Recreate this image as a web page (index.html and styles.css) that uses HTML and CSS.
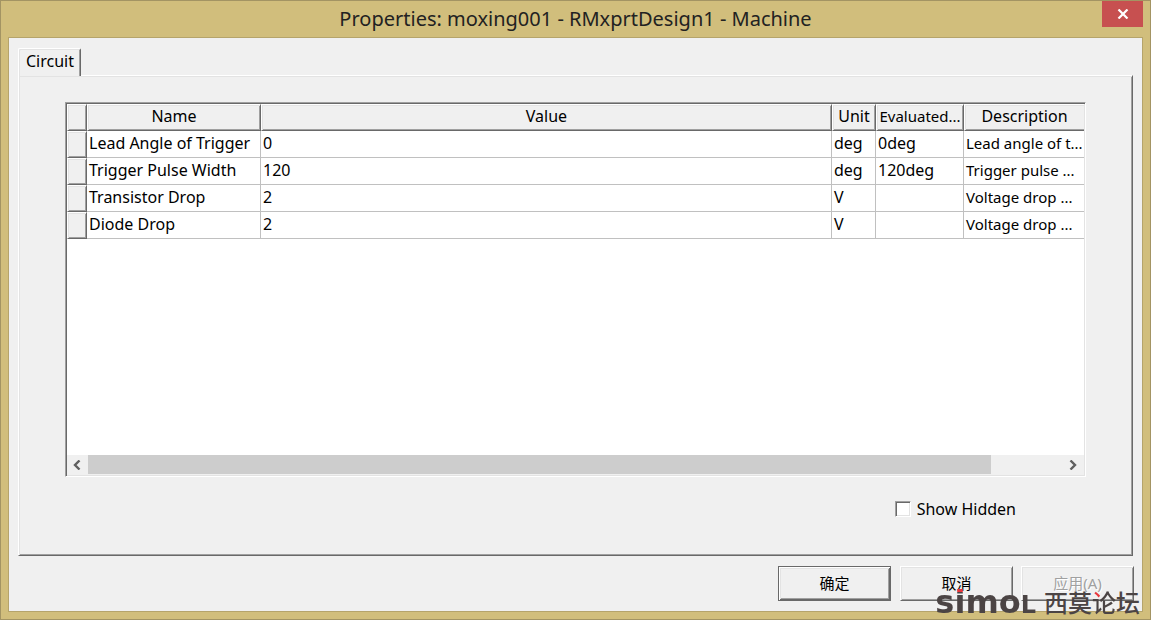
FILE: index.html
```html
<!DOCTYPE html>
<html lang="zh-CN">
<head>
<meta charset="utf-8">
<title>Properties: moxing001 - RMxprtDesign1 - Machine</title>
<link rel="stylesheet" href="styles.css">
</head>
<body>
<main class="window">
  <header class="titlebar">
    <h1 class="title">Properties: moxing001 - RMxprtDesign1 - Machine</h1>
    <button class="close" type="button" aria-label="Close">
      <svg width="12" height="10" viewBox="0 0 12 10"><path d="M1.500 .5 10.500 9.500M10.500 .5 1.500 9.500" fill="none" stroke="#fff" stroke-width="2.200"/></svg>
    </button>
  </header>
  <div class="client">
    <div class="tabs" role="tablist">
      <button class="tab" type="button" role="tab" aria-selected="true">Circuit</button>
    </div>
    <section class="panel">
      <div class="grid">
        <table class="props">
          <colgroup><col class="c-mark"><col class="c-name"><col><col class="c-unit"><col class="c-eval"><col class="c-desc"></colgroup>
          <thead>
            <tr><th></th><th>Name</th><th>Value</th><th>Unit</th><th class="tight">Evaluated...</th><th>Description</th></tr>
          </thead>
          <tbody>
            <tr><th></th><td>Lead Angle of Trigger</td><td>0</td><td>deg</td><td>0deg</td><td class="tight">Lead angle of t...</td></tr>
            <tr><th></th><td>Trigger Pulse Width</td><td>120</td><td>deg</td><td>120deg</td><td class="tight">Trigger pulse ...</td></tr>
            <tr><th></th><td>Transistor Drop</td><td>2</td><td>V</td><td></td><td class="tight">Voltage drop ...</td></tr>
            <tr><th></th><td>Diode Drop</td><td>2</td><td>V</td><td></td><td class="tight">Voltage drop ...</td></tr>
          </tbody>
        </table>
        <div class="scrollbar">
          <button class="arrow" type="button" aria-label="Scroll left"><svg width="8" height="10" viewBox="0 0 8 10"><path d="M6.500 .5 2 5l4.500 4.500" fill="none" stroke="#606060" stroke-width="2.400"/></svg></button>
          <div class="track"><div class="thumb"></div></div>
          <button class="arrow" type="button" aria-label="Scroll right"><svg width="8" height="10" viewBox="0 0 8 10"><path d="M1.500 .5 6 5 1.500 9.500" fill="none" stroke="#606060" stroke-width="2.400"/></svg></button>
        </div>
      </div>
      <label class="hidden-toggle"><input type="checkbox" class="box">Show Hidden</label>
    </section>
    <footer class="actions">
      <button class="btn btn-default" type="button">确定</button>
      <button class="btn" type="button">取消</button>
      <button class="btn" type="button" disabled>应用(A)</button>
    </footer>
  </div>
  <div class="watermark"><span class="brand">simo<span class="brand-end">L</span></span><span class="forum">西莫<span class="accent">论</span>坛</span></div>
</main>
</body>
</html>
```
FILE: styles.css
```css
* { box-sizing: border-box; }
body {
  margin: 0;
  font-family: "Noto Sans", "Noto Sans CJK SC", sans-serif;
  font-size: 16px;
  line-height: 20px;
  color: #000;
}
button { font: inherit; color: inherit; padding: 0; margin: 0; border: 0; border-radius: 0; background: none; }
svg { display: block; }

.window {
  position: relative;
  display: flex;
  flex-direction: column;
  min-height: 100vh;
  padding: 0 7px 7px;
  background: #d1be7c;
  border: 1px solid #a39463;
}
.titlebar {
  display: grid;
  grid-template-columns: 41px 1fr 41px;
  height: 36px;
}
.title {
  grid-column: 2;
  margin: 0;
  font-size: 20px;
  font-weight: 400;
  line-height: 36px;
  text-align: center;
  color: #222;
  white-space: nowrap;
}
.close {
  display: flex;
  align-items: center;
  justify-content: center;
  height: 26px;
  background: #c75050;
}
.client {
  flex: 1;
  display: flex;
  flex-direction: column;
  padding: 10px 8px 10px 9px;
  background: #f0f0f0;
  border: 1px solid #b5a46b;
}

.tabs { display: flex; }
.tab {
  position: relative;
  z-index: 1;
  height: 28px;
  margin-bottom: -1px;
  padding: 0 6px 3px 7px;
  background: #f0f0f0;
  border: 1px solid;
  border-width: 1px 1px 0;
  border-color: #fff #696969 #fff #fff;
  border-radius: 2px 2px 0 0;
  box-shadow: inset 1px 1px #e3e3e3, inset -1px 0 #a0a0a0;
}
.panel {
  flex: 1;
  display: flex;
  flex-direction: column;
  margin-right: 1px;
  padding: 26px 46px 36px;
  border: 1px solid;
  border-color: #fff #696969 #696969 #fff;
  box-shadow: inset 1px 1px #e3e3e3, inset -1px -1px #a0a0a0;
}

.grid {
  flex: 1;
  display: flex;
  flex-direction: column;
  justify-content: space-between;
  padding: 1px;
  background: #fff;
  border: 1px solid;
  border-color: #a0a0a0 #fff #fff #a0a0a0;
  box-shadow: inset 1px 1px #696969, inset -1px -1px #e3e3e3;
}
.props {
  width: 100%;
  table-layout: fixed;
  border-collapse: separate;
  border-spacing: 0;
}
.c-mark { width: 20px; }
.c-name { width: 174px; }
.c-unit { width: 44px; }
.c-eval { width: 88px; }
.c-desc { width: 120px; }
.props th, .props td {
  height: 27px;
  padding: 0 0 2px 2px;
  font-weight: 400;
  text-align: left;
  white-space: nowrap;
  overflow: hidden;
}
.props td {
  border: solid #c0c0c0;
  border-width: 0 1px 1px 0;
}
.props th {
  padding: 0 0 3px;
  text-align: center;
  background: #f0f0f0;
  border: 1px solid;
  border-color: #fff #696969 #696969 #fff;
  box-shadow: inset 1px 1px #e3e3e3, inset -1px -1px #a0a0a0;
}
.props .tight { font-size: 15px; }
.props th:last-child, .props td:last-child { border-right-width: 0; }
.props thead th:last-child { box-shadow: inset 1px 1px #e3e3e3, inset 0 -1px #a0a0a0; }

.scrollbar { display: flex; height: 20px; background: #f0f0f0; }
.arrow { display: flex; align-items: center; justify-content: center; width: 21px; padding-right: 2px; }
.track { flex: 1; padding-bottom: 1px; }
.thumb { width: 92.6%; height: 100%; background: #cdcdcd; }

.hidden-toggle {
  display: flex;
  align-items: center;
  align-self: flex-end;
  gap: 6px;
  margin: 22px 70px 0 0;
}
.box {
  appearance: none;
  width: 16px;
  height: 16px;
  margin: 0;
  background: #fff;
  border: 1px solid;
  border-color: #a0a0a0 #fff #fff #a0a0a0;
  box-shadow: inset 1px 1px #696969, inset -1px -1px #e3e3e3;
}

.actions { display: flex; justify-content: flex-end; gap: 8px; padding-top: 10px; }
.btn {
  width: 113px;
  height: 35px;
  padding-bottom: 1px;
  font-size: 15px;
  background: #f0f0f0;
  border: 1px solid;
  border-color: #fff #696969 #696969 #fff;
  box-shadow: inset 1px 1px #e3e3e3, inset -1px -1px #a0a0a0;
}
.btn-default {
  margin-right: 1px;
  border-color: #696969;
  box-shadow: inset 1px 1px #fff, inset -1px -1px #696969, inset 2px 2px #e3e3e3, inset -2px -2px #a0a0a0;
}
.btn:disabled { color: #a0a0a0; text-shadow: 1px 1px #fff; }

.watermark {
  position: absolute;
  right: 10px;
  bottom: 1px;
  display: flex;
  align-items: center;
  gap: 8px;
  height: 30px;
  color: #4b4444;
  line-height: 30px;
  pointer-events: none;
}
.brand {
  font-family: "DejaVu Sans", sans-serif;
  font-size: 32px;
  font-weight: 700;
  color: transparent;
  background: linear-gradient(#e8353b 5px, #4b4444 5px);
  background-clip: text;
}
.brand-end { font-size: 24px; }
.forum { font-size: 24px; font-weight: 500; }
.accent {
  color: transparent;
  background: radial-gradient(circle at 5px 9px, #e8353b 3px, #4b4444 4px);
  background-clip: text;
}
```
